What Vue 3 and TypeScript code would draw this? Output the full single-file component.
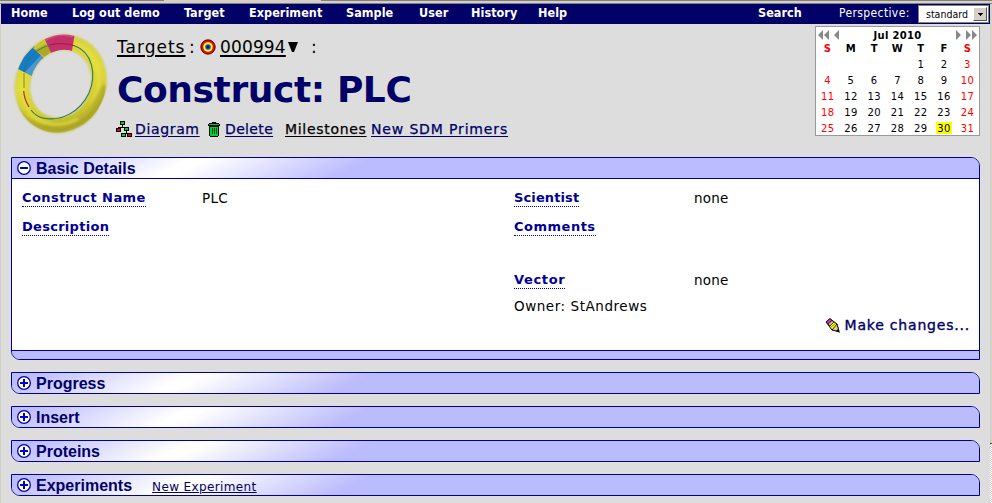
<script setup lang="ts">
interface MenuItem { label: string; width: number }

const menu: MenuItem[] = [
  { label: 'Home', width: 61 },
  { label: 'Log out demo', width: 112 },
  { label: 'Target', width: 65 },
  { label: 'Experiment', width: 97 },
  { label: 'Sample', width: 73 },
  { label: 'User', width: 52 },
  { label: 'History', width: 67 },
  { label: 'Help', width: 60 },
]

const weekdays: string[] = ['S', 'M', 'T', 'W', 'T', 'F', 'S']
const weeks: (number | null)[][] = [
  [null, null, null, null, 1, 2, 3],
  [4, 5, 6, 7, 8, 9, 10],
  [11, 12, 13, 14, 15, 16, 17],
  [18, 19, 20, 21, 22, 23, 24],
  [25, 26, 27, 28, 29, 30, 31],
]
const today = 30

const closedPanels: { title: string; action?: string }[] = [
  { title: 'Progress' },
  { title: 'Insert' },
  { title: 'Proteins' },
  { title: 'Experiments', action: 'New Experiment' },
]
</script>

<template>
  <div class="window">
    <div class="chrome-top"><i class="seg a"></i><i class="seg b"></i></div>
    <div class="page">
      <nav class="menubar">
        <a v-for="item in menu" :key="item.label" class="menu-item" :style="{ width: item.width + 'px' }">{{ item.label }}</a>
        <a class="menu-item search">Search</a>
        <span class="perspective">Perspective:</span>
        <span class="select">
          <span class="select-value">standard</span>
          <span class="select-button"><svg width="5" height="3" viewBox="0 0 5 3" shape-rendering="crispEdges"><path d="M0 0h5v1h-1v1h-1v1h-1v-1h-1v-1h-1z" /></svg></span>
        </span>
      </nav>

      <header class="head">
        <svg class="ring" width="100" height="106" viewBox="10 30 100 106">
          <defs>
            <linearGradient id="gold" x1="0" y1="0" x2="0.75" y2="1">
              <stop offset="0" stop-color="#d6d038" />
              <stop offset="0.5" stop-color="#e0da38" />
              <stop offset="0.8" stop-color="#d2cb2c" />
              <stop offset="1" stop-color="#b8b126" />
            </linearGradient>
            <filter id="soft" x="-10%" y="-10%" width="120%" height="120%"><feGaussianBlur stdDeviation="0.9" /></filter>
            <filter id="glow" x="-10%" y="-10%" width="120%" height="120%"><feGaussianBlur stdDeviation="1.6" /></filter>
            <mask id="band">
              <ellipse cx="60.7" cy="83.7" rx="37.5" ry="42.2" transform="rotate(24 60.7 83.7)" fill="none" stroke="#fff" stroke-width="15" />
            </mask>
          </defs>
          <g transform="rotate(24 60.7 83.7)" fill="none">
            <ellipse cx="60.7" cy="83.7" rx="37.5" ry="42.2" stroke="#d0ce7a" stroke-width="15.5" filter="url(#soft)" />
            <ellipse cx="60.7" cy="83.7" rx="37.5" ry="42.2" stroke="url(#gold)" stroke-width="13.5" filter="url(#soft)" />
            <ellipse cx="60.7" cy="83.7" rx="37.5" ry="42.2" stroke="#e8e34b" stroke-width="4" opacity=".6" filter="url(#glow)" />
          </g>
          <g mask="url(#band)">
            <path d="M105 84C101 110 80 125 59 126C38 127 22 117 16 101C20 127 38 137 61 133C89 129 109 104 105 84Z" fill="#a19a25" opacity=".6" filter="url(#soft)" />
            <path d="M105 84C100 84 95 108 76 117L84 125C100 112 107 96 105 84Z" fill="#aaa328" opacity=".6" filter="url(#soft)" />
            <path d="M44 38L50 31L75 32L72 51C64 49 57 50 51 54Z" fill="#c4306c" />
            <path d="M44 40C54 33 65 33 73 36" fill="none" stroke="#d65b87" stroke-width="4" opacity=".65" />
            <path d="M14 67L34 46L45 57C39 62 35 68 32 76Z" fill="#167bc9" />
            <path d="M25 72L42 54L47 58L33 77Z" fill="#70a4d1" opacity=".65" />
            <path d="M33 48L44 38L51 53L44 58Z" fill="#cbc431" />
            <path d="M35 50L45 57L51 51L46 44Z" fill="#908a20" opacity=".5" />
          </g>
          <path d="M24 72C26 58 37 48 51 45" fill="none" stroke="#30774c" stroke-width="1" opacity=".8" />
          <path d="M50 45C58 43 67 43 75 46" fill="none" stroke="#a31a3c" stroke-width="1" />
          <path d="M75 46C92 52 97 74 89 93C80 112 61 122 43 118C38 117 34 114 31 110" fill="none" stroke="#287865" stroke-width="1.1" />
          <path d="M24 73V88" fill="none" stroke="#8b8620" stroke-width="1" />
          <path d="M23.7 91C24 97 26 102 29 107" fill="none" stroke="#a83020" stroke-width="1.2" />
        </svg>

        <div class="heading">
          <div class="crumbs">
            <a class="crumb targets">Targets</a>
            <span class="colon">:</span>
            <svg class="bull" width="16" height="16" viewBox="0 0 16 16">
              <circle cx="8" cy="8" r="7.2" fill="#f00" stroke="#000" stroke-width=".8" />
              <circle cx="8" cy="8" r="4.8" fill="#ff0" />
              <circle cx="8" cy="8" r="2.7" fill="#0040ff" />
              <circle cx="8" cy="8" r="1" fill="#000" />
            </svg>
            <a class="crumb number">000994</a>
            <svg class="arrow" width="10" height="10" viewBox="0 0 10 10"><path d="M0 0h10L6 10H4z" /></svg>
            <span class="colon last">:</span>
          </div>
          <h1>Construct: PLC</h1>
          <div class="actions">
            <svg width="16" height="16" viewBox="0 0 16 16" shape-rendering="crispEdges">
              <path d="M6 3v3M2 8V6h7v2M10 10v2M7 13v-1h6v1" fill="none" stroke="#000" stroke-width="1" />
              <g stroke="#000" stroke-width="1"><path d="M4.500 .5h4v3h-4zM8.500 6.500h4v3h-4zM5.500 12.500h4v3h-4z" fill="#0c2" /><path d="M.5 7.500h4v3h-4zM11.500 12.500h4v3h-4z" fill="#e00" /></g>
            </svg>
            <a class="act diagram">Diagram</a>
            <svg class="bin" width="12" height="15" viewBox="0 0 12 15" shape-rendering="crispEdges">
              <path d="M4 0h4v1h3v1h1v2h-1v10h-1v1H2v-1H1V4H0V2h1V1h3z" fill="#000" /><path d="M1 2h10v1H1zM2 5h8v9H2z" fill="#0c3" /><path d="M3.500 6v6M5.500 6v6M7.500 6v6" transform="translate(.5 0)" stroke="#042" />
            </svg>
            <a class="act delete">Delete</a>
            <a class="act milestones">Milestones</a>
            <a class="act primers">New SDM Primers</a>
          </div>
        </div>

        <section class="calendar">
          <div class="cal-head">
            <svg width="23" height="10" viewBox="0 0 23 10" fill="#888"><path d="M5 0v10L0 5zM11 0v10L6 5zM21 0v10L16 5z" /></svg>
            <b>Jul 2010</b>
            <svg width="23" height="10" viewBox="0 0 23 10" fill="#888"><path d="M2 0v10l5-5zM12 0v10l5-5zM18 0v10l5-5z" /></svg>
          </div>
          <div class="cal-row names"><span v-for="(d, i) in weekdays" :key="i" :class="{ weekend: i === 0 || i === 6 }">{{ d }}</span></div>
          <div v-for="(week, w) in weeks" :key="w" class="cal-row">
            <span v-for="(d, i) in week" :key="i" :class="{ weekend: i === 0 || i === 6, today: d === today }">{{ d ?? '' }}</span>
          </div>
        </section>
      </header>

      <main class="panels">
        <section class="panel open">
          <div class="bar">
            <svg class="toggle" width="14" height="14" viewBox="0 0 14 14"><circle cx="7" cy="7" r="6.300" /><path d="M3 7h8" /></svg>
            <h2>Basic Details</h2>
          </div>
          <div class="details">
            <div class="column left">
              <div class="field"><span class="label name">Construct Name</span><span class="value">PLC</span></div>
              <div class="field"><span class="label description">Description</span></div>
            </div>
            <div class="column">
              <div class="field"><span class="label scientist">Scientist</span><span class="value">none</span></div>
              <div class="field comments"><span class="label">Comments</span></div>
              <div class="field vector"><span class="label">Vector</span><span class="value">none</span></div>
              <div class="owner">Owner: StAndrews</div>
              <div class="change">
                <svg width="16" height="15" viewBox="0 0 16 15">
                  <path d="M1 4L5 .7L12 6L14 13.500L7 12Z" fill="#ff0" stroke="#000" />
                  <path d="M1 4L5 .7L7 2.500L3 6Z" fill="#e2c" stroke="#000" stroke-width=".7" />
                  <path d="M3 6L7 2.500L9 4L5 8Z" fill="#bbb" stroke="#000" stroke-width=".7" />
                  <path d="M6 9l5-4" stroke="#665500" stroke-width=".7" /><path d="M7 12L12 6L14 13.500Z" fill="#dc9" stroke="#000" stroke-width=".8" /><path d="M11 13l2-2 2 4z" />
                </svg>
                <a>Make changes...</a>
              </div>
            </div>
          </div>
          <div class="foot"></div>
        </section>
        <section v-for="panel in closedPanels" :key="panel.title" class="panel closed">
          <div class="bar">
            <svg class="toggle" width="14" height="14" viewBox="0 0 14 14"><circle cx="7" cy="7" r="6.300" /><path d="M3 7h8M7 3v8" /></svg>
            <h2>{{ panel.title }}</h2>
            <a v-if="panel.action" class="bar-link">{{ panel.action }}</a>
          </div>
        </section>
      </main>
    </div>
    <div class="scroll"><div class="thumb"></div></div>
  </div>
</template>

<style>
body { margin: 0; overflow: hidden; background: #ddd; }
</style>

<style scoped>
* { box-sizing: border-box; }
.window { width: 992px; height: 503px; display: grid; grid-template: 4px 499px / 990px 2px; background: #ddd; font-family: "DejaVu Sans", sans-serif; overflow: hidden; }
.chrome-top { grid-column: 1 / 3; display: flex; justify-content: space-between; background: #d4d0c8; border-bottom: 1px solid #808080; }
.seg { height: 1px; background: #808080; }
.seg.a { width: 164px; }
.seg.b { width: 671px; }
.page { border-left: 1px solid #d4d0c8; min-width: 0; }
.menubar { height: 20px; background: #006; color: #fff; display: flex; align-items: flex-start; padding-left: 10px; }
.menu-item { flex: none; font: bold 12.500px/18px "DejaVu Sans Condensed", "DejaVu Sans", sans-serif; white-space: nowrap; letter-spacing: .06px; }
.search { width: 81px; margin-left: 160px; }
.perspective { width: 79px; flex: none; font: 12px/19px "DejaVu Sans Condensed", "DejaVu Sans", sans-serif; letter-spacing: .38px; }
.select { width: 71px; height: 18px; margin-top: 1px; background: #fff; border: 1px solid #808080; display: flex; color: #000; flex: none; align-items: center; justify-content: space-between; padding: 1px; }
.select-value { font: 10.500px/16px "DejaVu Sans Condensed", "DejaVu Sans", sans-serif; padding-left: 6px; }
.select-button { width: 14px; height: 14px; background: #d4d0c8; border: 1px solid; border-color: #fff #555 #555 #fff; display: flex; align-items: center; justify-content: center; }
.head { display: flex; height: 133px; align-items: flex-start; }
.ring { margin: 6px 0 0 9px; flex: none; }
.heading { margin-left: 6px; width: 699px; flex: none; }
.crumbs { height: 24px; margin-top: 11px; padding-left: 1px; display: flex; align-items: center; font-size: 17px; white-space: nowrap; line-height: 22px; }
.crumb { text-decoration: underline; text-decoration-thickness: 2px; text-underline-offset: 2px; flex: none; }
.targets { width: 72px; letter-spacing: 1px; }
.colon { width: 11px; }
.bull { flex: none; }
.number { width: 66px; margin-left: 4px; letter-spacing: .15px; }
.arrow { margin-left: 2px; }
.last { margin-left: 13px; }
h1 { margin: 6px 0 0 1px; color: #006; font: bold 36px/50px "DejaVu Sans", sans-serif; letter-spacing: -.4px; white-space: nowrap; }
.actions { display: flex; height: 20px; margin-top: 4px; align-items: center; white-space: nowrap; font-size: 14px; }
.act { color: #006; text-decoration: underline; text-underline-offset: 2px; flex: none; -webkit-text-stroke: .25px; }
.diagram { width: 73px; margin-left: 3px; letter-spacing: .65px; }
.bin { flex: none; }
.delete { width: 60px; margin-left: 5px; letter-spacing: .35px; }
.milestones { width: 86px; color: #000; letter-spacing: .7px; }
.primers { letter-spacing: .85px; }
.calendar { width: 165px; height: 110px; margin-top: 2px; border: 1px solid #999; background: #fff; font-size: 10px; flex: none; }
.cal-head { display: flex; height: 15px; align-items: center; justify-content: space-between; padding: 1px 2px 0; }
.cal-head b { letter-spacing: .3px; }
.cal-row { display: grid; grid-template-columns: repeat(7, 23.300px); height: 16px; line-height: 13px; text-align: center; justify-items: center; letter-spacing: .4px; }
.names { font-weight: bold; }
.weekend { color: #f00; }
.today { background: #ff0; width: 16px; height: 12px; }
.panels { padding-left: 10px; width: 979px; display: flex; flex-direction: column; gap: 12px; }
.panel { border: 1px solid #009; border-radius: 0 9px 0 9px; overflow: hidden; flex: none; }
.bar { height: 20px; display: flex; align-items: center; padding-left: 5px; background: linear-gradient(153deg, #bbf 8px, #fff 82px, #fff 90px, #bbf 164px); }
.open .bar { height: 21px; border-bottom: 1px solid #009; }
.toggle { flex: none; fill: #fff; stroke: #009; stroke-width: 1.300; }
.toggle path { stroke-width: 2; stroke: #00c; }
h2 { color: #006; font: bold 16px/20px "Liberation Sans", Arial, sans-serif; margin: 2px 0 0 5px; }
.bar-link { margin: 4px 0 0 20px; color: #006; font-size: 12px; letter-spacing: .38px; text-decoration: underline; }
.details { height: 171px; background: #fff; display: grid; grid-template-columns: 492px 464px; padding: 8px 0 0 10px; font-size: 14px; }
.field { display: flex; height: 29px; align-items: flex-start; }
.value { font-size: 13.500px; line-height: 22px; letter-spacing: .25px; }
.field .value { margin-left: auto; width: 284px; }
.left .value { width: 312px; }
.label { color: #009; font-weight: bold; font-size: 13px; line-height: 18px; padding-top: 2px; height: 20px; border-bottom: 1px dotted #009; white-space: nowrap; letter-spacing: .5px; }
.name { letter-spacing: .43px; }
.description { letter-spacing: .28px; }
.scientist { letter-spacing: .12px; }
.vector .label { letter-spacing: .65px; }
.comments { height: 53px; }
.owner { line-height: 18px; height: 18px; font-size: 13.500px; letter-spacing: .55px; margin-top: -1px; }
.change { display: flex; justify-content: flex-end; align-items: center; height: 18px; margin-top: 1px; gap: 4px; padding-right: 8px; color: #006; letter-spacing: .8px; -webkit-text-stroke: .35px; }
.foot { height: 9px; border-top: 1px solid #009; background: #bbf; }
.scroll { background: repeating-conic-gradient(#fff 0 25%, #d4d0c8 0 50%) 0 0 / 2px 2px; }
.thumb { height: 440px; background: #d4d0c8; border-bottom: 1px solid #444; }
</style>
